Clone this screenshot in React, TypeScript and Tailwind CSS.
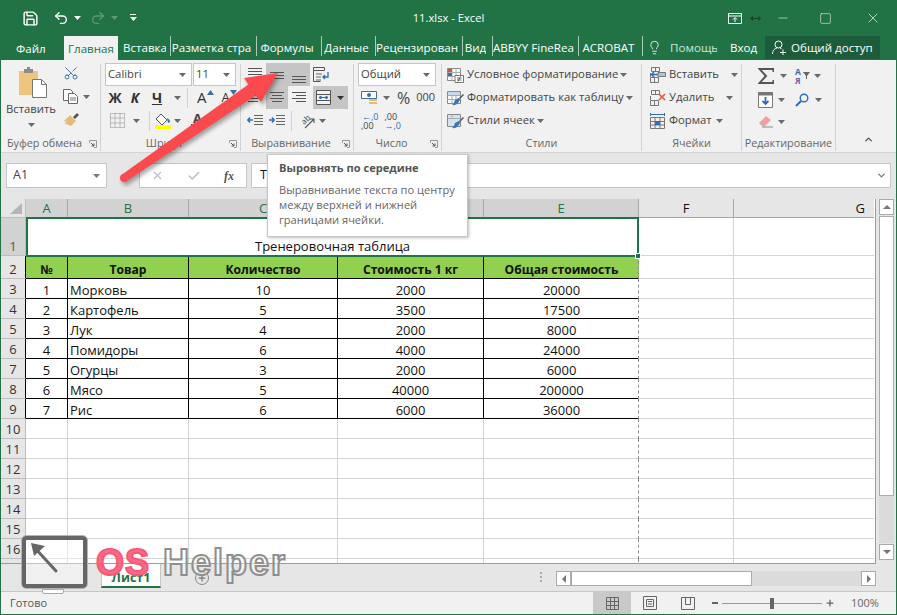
import React from 'react';
import { Check, ChevronDown, ChevronUp, Lightbulb, Minus, Plus, Save, Scissors, Square, Undo2, Redo2, X } from 'lucide-react';

const Caret = ({ color = '#6a6a6a' }: { color?: string }) => (
  <svg width="7" height="4" viewBox="0 0 7 4" className="shrink-0"><path d="M0 0h7L3.500 4z" fill={color} /></svg>
);

// horizontal lines used by all alignment icons
const Lines = ({ rows }: { rows: [number, number, number][] }) => (
  <svg width="16" height="18" viewBox="0 0 16 18">
    {rows.map(([y, x1, x2], i) => (
      <line key={i} x1={x1} x2={x2} y1={y + 0.5} y2={y + 0.5} stroke="#555" />
    ))}
  </svg>
);

const Launcher = () => (
  <svg width="8" height="8" viewBox="0 0 8 8" className="absolute right-[3px] bottom-[3px]">
    <path d="M.5 3V.5H7.500V7.500H5" fill="none" stroke="#999" />
    <path d="M2 3l3 3M5 3.500V6H2.500" fill="none" stroke="#555" />
  </svg>
);

function Group({ w, label, launcher, children }: { w: string; label: string; launcher?: boolean; children: React.ReactNode }) {
  return (
    <div className={`relative shrink-0 ${w} h-[87px] mt-[4px] border-r border-[#d2d2d2] flex flex-col`}>
      <div className="h-[71px] flex">{children}</div>
      <div className={`h-[16px] leading-[16px] text-center text-[10.8px] text-[#666] whitespace-nowrap ${launcher ? 'pr-[12px]' : ''}`}>{label}</div>
      {launcher && <Launcher />}
    </div>
  );
}

const tabs = [
  ['Вставка', 'w-[48px]'],
  ['Разметка стра', 'w-[86px]'],
  ['Формулы', 'w-[65px]'],
  ['Данные', 'w-[54px]'],
  ['Рецензирован', 'w-[87px]'],
  ['Вид', 'w-[30px]'],
  ['ABBYY FineRea', 'w-[86px]'],
  ['ACROBAT', 'w-[64px]'],
];

function TitleBar() {
  return (
    <div className="h-[36px] shrink-0 flex items-center text-white">
      <div className="flex-1 flex items-center">
        <Save size={17} strokeWidth={2} className="ml-[21px]" />
        <Undo2 size={16} strokeWidth={2} className="ml-[14px]" />
        <span className="ml-[5px]"><Caret color="#fff" /></span>
        <Redo2 size={16} strokeWidth={2} className="ml-[9px] text-[#5d9a78]" />
        <span className="ml-[5px]"><Caret color="#5d9a78" /></span>
        <svg width="7" height="8" viewBox="0 0 7 8" className="ml-[12px]"><path d="M0 .5h6" stroke="#fff" /><path d="M0 3h7L3.500 7z" fill="#fff" /></svg>
      </div>
      <div className="text-center text-[11.2px] w-[80px] whitespace-nowrap">11.xlsx - Excel</div>
      <div className="flex-1 flex items-center justify-end">
        <svg width="14" height="11" viewBox="0 0 14 11" className="mr-[8px]">
          <path d="M.5.5h13v10H.5zM.5 3h13M7 9V5M5 6.500L7 4.500l2 2" fill="none" stroke="#fff" />
        </svg>
        <svg width="11" height="7" viewBox="0 0 11 7" className="mr-[15px]">
          <path d="M0 3.500L3 1v5zM11 3.500L8 1v5zM2 3h7v1H2z" fill="#17402a" />
        </svg>
        <Minus size={14} strokeWidth={1} className="mr-[29px]" />
        <Square size={13} strokeWidth={1} className="mr-[33px]" />
        <X size={16} strokeWidth={1} className="mr-[15px]" />
      </div>
    </div>
  );
}

function TabBar() {
  return (
    <div className="h-[24px] shrink-0 flex items-stretch text-[11.6px] text-white">
      <div className="w-[63px] pl-[15px] leading-[26px]">Файл</div>
      <div className="w-[54px] bg-[#f1f1f1] text-[#217346] text-center leading-[25px]">Главная</div>
      <div className="w-[5px]" />
      {tabs.map(([t, w]) => (
        <div key={t} className={`${w} shrink-0 flex h-[20px] border-r border-[#a9cdb9] whitespace-nowrap leading-[23px] pr-[4px] justify-center`}>
          <span className="overflow-hidden">{t}</span>
        </div>
      ))}
      <Lightbulb size={15} strokeWidth={1.3} className="ml-[4px] mt-[4px]" />
      <div className="w-[47px] ml-[8px] overflow-hidden whitespace-nowrap leading-[24px] text-[#cfe3d8]">Помощь</div>
      <div className="w-[48px] pl-[13px] leading-[24px]">Вход</div>
      <div className="w-[115px] h-[23px] bg-[#1d5c3a] flex items-center pl-[7px] gap-[4px] whitespace-nowrap">
        <svg width="15" height="15" viewBox="0 0 15 15">
          <circle cx="6.500" cy="4.500" r="3.500" fill="none" stroke="#fff" />
          <path d="M.5 14c0-4 2.500-5.500 4.500-6M8 8l1.500.7" fill="none" stroke="#fff" />
          <path d="M8 12.500h6M11 9.500v6" stroke="#fff" />
        </svg>
        <span>Общий доступ</span>
      </div>
    </div>
  );
}

const Cell = ({ on, children }: { on?: boolean; children?: React.ReactNode }) => (
  <div className={`w-[22px] h-[23px] flex items-center justify-center ${on ? 'bg-[#c5c5c5]' : ''}`}>{children}</div>
);

function StyleIcon({ i }: { i: number }) {
  return (
    <svg width="17" height="16" viewBox="0 0 17 16" className="mr-[3px]">
      <path d="M.5 1.500h13v12H.5z" fill={i === 2 ? '#d5e3f1' : '#fff'} stroke="#888" />
      {i !== 2 && <path d="M.5 5.500h13M.5 9.500h13M5 1.500v12M9 1.500v12" fill="none" stroke="#aaa" />}
      {i === 2 && <path d="M.5 5.500h13M5 1.500v4" fill="none" stroke="#aaa" />}
      {i === 0 && <path d="M1 2h4v3H1z" fill="#d9542b" />}
      {i === 0 && <path d="M1 6h4v3H1z" fill="#3b6fa5" />}
      {i === 0 && <path d="M8 8.500h8.500v7H8z" fill="#fff" stroke="#555" strokeWidth=".8" />}
      {i === 0 && <path d="M10 11h4.500M10 13h4.500M11 14.500l2.500-5" stroke="#333" strokeWidth=".7" />}
      {i === 1 && <path d="M1 2h12v3H1z" fill="#c7d9ec" />}
      {i !== 0 && <path d="M12 8l4-4 1 1-4 4z" fill="#555" />}
      {i !== 0 && <path d="M8 10c2-1 3-2 4-2l1 1c0 1-1 3-2 4-1 1.500-3 2.500-6 2 2-1 2-3 3-5z" fill="#3b76b8" />}
    </svg>
  );
}

function CellIcon({ i }: { i: number }) {
  if (i === 2) {
    return (
      <svg width="16" height="16" viewBox="0 0 16 16" className="mr-[3px]">
        <path d="M.5 0v3M14.500 0v3M1 1.500h13" stroke="#2f6eb3" />
        <path d="M.5 4.500h14v11H.5zM.5 8.500h14M.5 12h14M5 4.500v11M10 4.500v11" fill="none" stroke="#777" />
        <path d="M5 8h5v4H5z" fill="#2f6eb3" />
      </svg>
    );
  }
  return (
    <svg width="16" height="16" viewBox="0 0 16 16" className="mr-[3px]">
      <path d="M1.500.5h8v4h-8zM5.500.5v4M.5 10.500h8v5h-8zM4.500 10.500v5M.5 6v4" fill="none" stroke="#777" />
      {i === 0 && <path d="M8 5.500h7.500v4H8z" fill="#a8c4e0" stroke="#777" />}
      {i === 0 && <path d="M8 7.500H1M4 5L1.500 7.500 4 10" fill="none" stroke="#2f6eb3" strokeWidth="1.500" />}
      {i === 1 && <path d="M9 4l6 6M15 4l-6 6" stroke="#e3593d" strokeWidth="1.700" />}
    </svg>
  );
}

function Ribbon() {
  return (
    <div className="h-[93px] shrink-0 bg-[#f1f1f1] border-b border-[#d4d4d4] flex items-start text-[#444] text-[11.3px]">
      <Group w="w-[100px]" label="Буфер обмена" launcher>
        <div className="w-[58px] flex flex-col items-center pt-[3px] pl-[6px]">
          <svg width="30" height="32" viewBox="0 0 30 32">
            <path d="M1 4h19v24H1z" fill="#eec57d" />
            <path d="M6 2h9v4H6z" fill="#8c8c8c" /><path d="M9 0h3v3H9z" fill="#8c8c8c" />
            <path d="M14.500 12.500h9l5 5v13h-14z" fill="#fff" stroke="#777" />
            <path d="M23.500 12.500v5h5" fill="none" stroke="#777" />
          </svg>
          <div className="mt-[2px] ml-[-4px] leading-[16px] text-[#444]">Вставить</div>
          <div className="mt-[6px] ml-[-4px]"><Caret /></div>
        </div>
        <div className="flex flex-col pl-[4px] pt-[1px] gap-[8px]">
          <Scissors size={16} strokeWidth={1.4} className="text-[#3b6fa5] -rotate-90" />
          <div className="flex items-center gap-[5px]">
            <svg width="15" height="15" viewBox="0 0 15 15"><path d="M.5.5h7l2 2v9H.5z" fill="#fff" stroke="#666" /><path d="M5.500 4.500h6l3 3v7h-9z" fill="#fff" stroke="#666" /><path d="M7 9h6M7 11h6" stroke="#777" /></svg>
            <Caret />
          </div>
          <svg width="17" height="15" viewBox="0 0 17 15"><path d="M10 5l4-4 2 2-4 4z" fill="#555" /><path d="M7 3l6 6-5 5-7-3 3-1-3-1z" fill="#e3bb7b" /></svg>
        </div>
      </Group>

      <Group w="w-[140px]" label="Шрифт" launcher>
        <div className="flex flex-col pl-[4px]">
          <div className="flex gap-[1px] mt-[-1px]">
            <div className="w-[87px] h-[23px] bg-white border border-[#c6c6c6] flex items-center justify-between pl-[2px] pr-[5px]">Calibri<Caret /></div>
            <div className="w-[43px] h-[23px] bg-white border border-[#c6c6c6] flex items-center justify-between pl-[2px] pr-[5px]">11<Caret /></div>
          </div>
          <div className="h-[23px] flex items-center text-[14px] text-[#333] font-bold">
            <span className="w-[20px] text-center">Ж</span>
            <span className="w-[20px] text-center italic">К</span>
            <span className="w-[24px] text-center underline">Ч</span>
            <span className="ml-[5px]"><Caret /></span>
            <div className="w-px h-[20px] bg-[#d2d2d2] ml-[6px]" />
            <span className="ml-[9px] text-[15px] font-normal">A</span>
            <svg width="7" height="5" viewBox="0 0 7 5" className="mb-[10px]"><path d="M0 5l3.500-5L7 5z" fill="#3b6fa5" /></svg>
            <span className="ml-[8px] text-[13px] font-normal">A</span>
            <svg width="7" height="5" viewBox="0 0 7 5" className="mb-[10px]"><path d="M0 0l3.500 5L7 0z" fill="#3b6fa5" /></svg>
          </div>
          <div className="h-[23px] flex items-center">
            <svg width="15" height="15" viewBox="0 0 15 15" className="ml-[5px]"><path d="M.5.5h14v14H.5zM5 .5v14M10 .5v14M.5 5h14M.5 10h14" fill="none" stroke="#888" strokeDasharray="1 1" /></svg>
            <span className="ml-[8px]"><Caret /></span>
            <div className="w-px h-[20px] bg-[#d2d2d2] ml-[9px]" />
            <div className="ml-[4px] flex flex-col items-center">
              <svg width="17" height="12" viewBox="0 0 17 12"><path d="M7 1l6 6-5 5-6-6z" fill="#fff" stroke="#555" /><path d="M13 5c2 1 3 2 3 4l-2 1z" fill="#2f6eb3" /></svg>
              <div className="w-[16px] h-[4px] bg-[#ffff00]" />
            </div>
            <span className="ml-[3px]"><Caret /></span>
            <div className="ml-[10px] flex flex-col items-center leading-none">
              <span className="text-[13px] font-bold leading-[11px]">A</span>
              <div className="w-[13px] h-[4px] bg-[#ff0000]" />
            </div>
          </div>
        </div>
      </Group>

      <Group w="w-[113px]" label="Выравнивание" launcher>
        <div className="pl-[3px] mt-[-1px]">
          <div className="flex">
            <Cell><Lines rows={[[2, 1, 15], [5, 1, 15], [8, 1, 15]]} /></Cell>
            <Cell on><Lines rows={[[6, 1, 15], [9, 1, 15], [12, 1, 15]]} /></Cell>
            <Cell on><Lines rows={[[10, 1, 15], [13, 1, 15], [16, 1, 15]]} /></Cell>
            <Cell>
              <svg width="16" height="16" viewBox="0 0 16 16"><path d="M.5.5h11v3H.5zM.5 3.500v11h7" fill="none" stroke="#555" /><path d="M3 7h6M3 10h5M3 13h5" stroke="#666" /><path d="M15 5v5h-5M12 8l-2 2 2 2" fill="none" stroke="#2f6eb3" strokeWidth="1.300" /></svg>
            </Cell>
          </div>
          <div className="flex">
            <Cell><Lines rows={[[3, 1, 15], [6, 1, 11], [9, 1, 15], [12, 1, 11]]} /></Cell>
            <Cell on><Lines rows={[[3, 1, 15], [6, 3, 13], [9, 1, 15], [12, 3, 13]]} /></Cell>
            <Cell><Lines rows={[[3, 1, 15], [6, 5, 15], [9, 1, 15], [12, 5, 15]]} /></Cell>
            <div className="w-[35px] ml-[3px] h-[23px] bg-[#c5c5c5] flex items-center pl-[3px] gap-[6px]">
              <svg width="15" height="15" viewBox="0 0 15 15"><path d="M.5.5h14v14H.5zM.5 4.500h14M.5 10.500h14" fill="#f1f1f1" stroke="#555" /><path d="M3 7.500h9M3 7.500l2-1.500v3zM12 7.500l-2-1.500v3z" stroke="#2f6eb3" fill="#2f6eb3" /></svg>
              <Caret color="#333" />
            </div>
          </div>
          <div className="flex items-center">
            <Cell>
              <svg width="16" height="13" viewBox="0 0 16 13"><path d="M7 1.500h9M7 4.500h9M7 7.500h9M7 10.500h9" stroke="#666" /><path d="M6 6H1M3 3.500L.8 6 3 8.500" fill="none" stroke="#2f6eb3" strokeWidth="1.500" /></svg>
            </Cell>
            <Cell>
              <svg width="16" height="13" viewBox="0 0 16 13"><path d="M7 1.500h9M7 4.500h9M7 7.500h9M7 10.500h9" stroke="#666" /><path d="M0 6h5M3 3.500L5.200 6 3 8.500" fill="none" stroke="#2f6eb3" strokeWidth="1.500" /></svg>
            </Cell>
            <div className="w-px h-[20px] bg-[#d2d2d2] ml-[3px]" />
            <svg width="18" height="17" viewBox="0 0 18 17" className="ml-[7px] overflow-visible">
              <text x="2" y="11" fontSize="8" fill="#444" transform="rotate(-45 6 8)">ab</text>
              <path d="M6 16L15 7M15 11V7h-4" fill="none" stroke="#555" strokeWidth="1.100" />
            </svg>
            <span className="ml-[2px]"><Caret /></span>
          </div>
        </div>
      </Group>

      <Group w="w-[88px]" label="Число" launcher>
        <div className="pl-[4px] flex flex-col mt-[-1px]">
          <div className="w-[78px] h-[23px] bg-white border border-[#c6c6c6] flex items-center justify-between pl-[2px] pr-[5px]">Общий<Caret /></div>
          <div className="h-[23px] flex items-center pl-[3px]">
            <svg width="17" height="16" viewBox="0 0 17 16"><path d="M.5 1.500h15v7H.5z" fill="#fff" stroke="#3b6fa5" /><circle cx="8" cy="5" r="2" fill="#3b6fa5" /><path d="M8 9h8v2H8zM8 12h8v2H8z" fill="#e3bb7b" /></svg>
            <span className="ml-[5px]"><Caret /></span>
            <span className="ml-[7px] text-[16px] text-[#444]">%</span>
            <span className="ml-[6px] text-[11px]">000</span>
          </div>
          <div className="h-[23px] flex items-center pl-[3px] gap-[6px] text-[9px] text-[#444]">
            <div className="flex flex-col leading-[9px]"><span className="text-[#2f6eb3] pl-[1px]">←,0</span><span>,00</span></div>
            <div className="flex flex-col leading-[9px]"><span>,00</span><span className="text-[#2f6eb3]">→,0</span></div>
          </div>
        </div>
      </Group>

      <Group w="w-[200px]" label="Стили">
        <div className="pl-[5px] flex flex-col whitespace-nowrap mt-[-1px]">
          {['Условное форматирование', 'Форматировать как таблицу', 'Стили ячеек'].map((t, i) => (
            <div key={t} className="h-[23px] flex items-center">
              <StyleIcon i={i} />
              <span>{t}</span>
              <span className="ml-[2px]"><Caret /></span>
            </div>
          ))}
        </div>
      </Group>

      <Group w="w-[100px]" label="Ячейки">
        <div className="pl-[8px] flex flex-col mt-[-1px]">
          {[['Вставить', 'ml-[12px]'], ['Удалить', 'ml-[12px]'], ['Формат', 'ml-[4px]']].map(([t, m], i) => (
            <div key={t} className="h-[23px] flex items-center">
              <CellIcon i={i} />
              <span>{t}</span>
              <span className={m}><Caret /></span>
            </div>
          ))}
        </div>
      </Group>

      <Group w="w-[94px]" label="Редактирование">
        <div className="pl-[16px] grid grid-cols-[37px_35px] mt-[-1px] h-[69px]">
          <div className="flex items-center gap-[6px]">
            <svg width="16" height="16" viewBox="0 0 16 16"><path d="M15.500 4V1H1.500L8 8l-6.500 7h14v-3" fill="none" stroke="#555" strokeWidth="2" /></svg>
            <Caret />
          </div>
          <div className="flex items-center gap-[2px]">
            <div className="flex flex-col text-[8.500px] leading-[9px] font-bold text-[#3b6fa5]"><span>А</span><span className="text-[#7a5ea8]">Я</span></div>
            <svg width="7" height="7" viewBox="0 0 7 7"><path d="M0 0h7L4 4v3H3V4z" fill="#666" /></svg>
            <span className="ml-[2px]"><Caret /></span>
          </div>
          <div className="flex items-center gap-[5px]">
            <svg width="15" height="16" viewBox="0 0 15 16"><path d="M.5.5h14v15H.5z" fill="#fff" stroke="#777" /><path d="M.5.5h14v3H.5z" fill="#777" /><path d="M7.500 5v7M4.500 9l3 3 3-3" fill="none" stroke="#2f6eb3" strokeWidth="1.800" /></svg>
            <Caret />
          </div>
          <div className="flex items-center gap-[6px]">
            <svg width="14" height="14" viewBox="0 0 14 14"><circle cx="9" cy="5" r="3.800" fill="none" stroke="#2f6eb3" strokeWidth="1.400" /><path d="M6 8l-5 5" stroke="#2f6eb3" strokeWidth="2" /></svg>
            <Caret />
          </div>
          <div className="flex items-center gap-[5px]">
            <svg width="15" height="13" viewBox="0 0 15 13"><path d="M1 8l7-7 5 4-6 6H4z" fill="#f0a0a0" /><path d="M4 12h11" stroke="#888" /></svg>
            <Caret />
          </div>
        </div>
      </Group>

      <div className="flex-1 relative h-[87px]">
        <ChevronUp size={11} strokeWidth={3} className="absolute right-[22px] bottom-[2px] text-[#555]" />
      </div>
    </div>
  );
}

function FormulaBar() {
  return (
    <div className="h-[46px] shrink-0 bg-[#e6e6e6] flex items-start pt-[10px] text-[12.5px] text-[#444]">
      <div className="ml-[5px] w-[101px] h-[25px] bg-white border border-[#c6c6c6] flex items-center justify-between pl-[6px] pr-[6px]">
        <span>A1</span><Caret color="#777" />
      </div>
      <div className="ml-[32px] w-[108px] h-[25px] bg-white border border-[#c6c6c6] flex items-center text-[#bbb]">
        <X size={13} strokeWidth={2} className="ml-[11px]" />
        <Check size={14} strokeWidth={2.500} className="ml-[23px]" />
        <span className="ml-[23px] text-[12px] italic text-[#555] font-['Liberation_Serif',serif] font-bold">fx</span>
      </div>
      <div className="ml-[4px] flex-1 mr-[5px] h-[25px] bg-white border border-[#c6c6c6] flex items-center justify-between pl-[8px] pr-[3px] text-[#111]">
        <span>Т</span>
        <ChevronDown size={11} strokeWidth={3} className="text-[#777]" />
      </div>
    </div>
  );
}

const rows = [
  ['1', 'Морковь', '10', '2000', '20000'],
  ['2', 'Картофель', '5', '3500', '17500'],
  ['3', 'Лук', '4', '2000', '8000'],
  ['4', 'Помидоры', '6', '4000', '24000'],
  ['5', 'Огурцы', '3', '2000', '6000'],
  ['6', 'Мясо', '5', '40000', '200000'],
  ['7', 'Рис', '6', '6000', '36000'],
];
const heads = ['№', 'Товар', 'Количество', 'Стоимость 1 кг', 'Общая стоимость'];
const emptyRows = [10, 11, 12, 13, 14, 15, 16, 17];

const RowNum = ({ n, on, edge }: { n?: number; on?: boolean; edge?: boolean }) => (
  <div className={`border-r border-b border-b-[#bdbdbd] text-[13px] text-center flex items-end justify-center leading-[18px] ${edge ? 'border-r-black' : 'border-r-[#bdbdbd]'} ${on ? 'bg-[#d2d2d2] text-[#217346]' : 'bg-[#e6e6e6] text-[#333]'}`}>{n}</div>
);

// right edge of column E: the dashed page break runs over every row below the title
const PageBreak = ({ h }: { h: string }) => <div className={`absolute right-0 top-0 ${h} border-r border-dashed border-[#8a8a8a]`} />;

function Sheet() {
  return (
    <div className="h-[365px] shrink-0 flex bg-[#e6e6e6]">
      <div className="w-[875px] h-[365px] border-b border-r border-[#9c9c9c] overflow-hidden shrink-0 relative">
        <div className="grid grid-cols-[25px_42px_121px_149px_146px_155px_95px_140px] grid-rows-[19px_38px_23px_repeat(15,20px)] text-[13px] text-[#111] bg-white">
          <div className="bg-[#e6e6e6] border-r border-b border-[#bdbdbd] flex items-end justify-end pr-[3px] pb-[3px]">
            <svg width="12" height="11" viewBox="0 0 12 11"><path d="M12 0v11H0z" fill="#b5b5b5" /></svg>
          </div>
          {['A', 'B', 'C', 'D', 'E'].map((c) => (
            <div key={c} className="bg-[#d2d2d2] border-r border-b border-[#a8a8a8] text-[#217346] text-center leading-[19px]">{c}</div>
          ))}
          <div className="bg-[#e6e6e6] border-r border-b border-[#a8a8a8] text-center leading-[19px]">F</div>
          <div className="bg-[#e6e6e6] border-b border-[#a8a8a8] text-right pr-[9px] leading-[19px]">G</div>

          <RowNum n={1} on />
          <div className="col-span-5 border-2 border-[#217346] mt-[-1px] mb-[-1px] relative z-10 flex items-end justify-center leading-[17px]">
            Тренеровочная таблица
            <div className="absolute right-[-4px] bottom-[-4px] w-[6px] h-[6px] bg-[#217346] border border-white" />
          </div>
          <div className="border-r border-b border-[#d4d4d4]" />
          <div className="border-b border-[#d4d4d4]" />

          <RowNum n={2} edge />
          {heads.map((h, j) => (
            <div key={h} className={`relative bg-[#92d050] border-b border-black font-bold text-[12.1px] text-center leading-[27px] ${j < 4 ? 'border-r' : ''}`}>
              {h}
              {j === 4 && <PageBreak h="h-[23px]" />}
            </div>
          ))}
          <div className="border-r border-b border-[#d4d4d4]" />
          <div className="border-b border-[#d4d4d4]" />

          {rows.map((r, i) => (
            <React.Fragment key={i}>
              <RowNum n={i + 3} edge />
              {r.map((v, j) => (
                <div key={j} className={`relative border-b border-black leading-[22px] ${j < 4 ? 'border-r' : ''} ${j === 1 ? 'pl-[2px]' : 'text-center'}`}>
                  {v}
                  {j === 4 && <PageBreak h="h-[20px]" />}
                </div>
              ))}
              <div className="border-r border-b border-[#d4d4d4]" />
              <div className="border-b border-[#d4d4d4]" />
            </React.Fragment>
          ))}

          {emptyRows.map((n) => (
            <React.Fragment key={n}>
              <RowNum n={n < 17 ? n : undefined} />
              <div className="border-r border-b border-[#d4d4d4]" />
              <div className="border-r border-b border-[#d4d4d4]" />
              <div className="border-r border-b border-[#d4d4d4]" />
              <div className="border-r border-b border-[#d4d4d4]" />
              <div className="relative border-b border-[#d4d4d4]"><PageBreak h="h-[20px]" /></div>
              <div className="border-r border-b border-[#d4d4d4]" />
              <div className="border-b border-[#d4d4d4]" />
            </React.Fragment>
          ))}
        </div>
      </div>
      <div className="w-[20px] shrink-0 pl-[3px] pr-[2px] flex flex-col">
        <div className="h-[16px] bg-white border border-[#ababab] flex items-center justify-center"><svg width="8" height="4" viewBox="0 0 8 4"><path d="M0 4h8L4 0z" fill="#777" /></svg></div>
        <div className="h-[280px] mt-[1px] bg-white border border-[#ababab]" />
        <div className="flex-1 bg-[#dbdbdb] mb-[1px]" />
        <div className="h-[16px] bg-white border border-[#ababab] mb-[4px] flex items-center justify-center"><svg width="8" height="4" viewBox="0 0 8 4"><path d="M0 0h8L4 4z" fill="#777" /></svg></div>
      </div>
    </div>
  );
}

function SheetBar() {
  return (
    <div className="h-[28px] shrink-0 bg-[#e6e6e6] border-b border-[#c6c6c6] flex items-start">
      <div className="ml-[100px] w-[60px] h-[24px] bg-white border-x border-[#c6c6c6] border-b-2 border-b-[#217346] text-center text-[12.500px] font-bold text-[#217346] leading-[27px]">Лист1</div>
      <div className="ml-[34px] mt-[7px] w-[14px] h-[14px] rounded-full border border-[#888] flex items-center justify-center"><Plus size={10} strokeWidth={3} className="text-[#777]" /></div>
      <div className="ml-[331px] mt-[8px] flex flex-col gap-[2px]">
        <div className="w-[2px] h-[2px] bg-[#aaa]" /><div className="w-[2px] h-[2px] bg-[#aaa]" /><div className="w-[2px] h-[2px] bg-[#aaa]" />
      </div>
      <div className="ml-[14px] mt-[7px] w-[320px] h-[15px] bg-[#dbdbdb] flex">
        <div className="w-[15px] bg-white border border-[#ababab] flex items-center justify-center"><svg width="4" height="8" viewBox="0 0 4 8"><path d="M4 0v8L0 4z" fill="#777" /></svg></div>
        <div className="w-[181px] bg-white border border-[#ababab]" />
        <div className="flex-1" />
        <div className="w-[15px] bg-white border border-[#ababab] flex items-center justify-center"><svg width="4" height="8" viewBox="0 0 4 8"><path d="M0 0v8l4-4z" fill="#777" /></svg></div>
      </div>
    </div>
  );
}

function StatusBar() {
  return (
    <div className="h-[22px] shrink-0 bg-[#f1f1f1] flex items-center text-[11px] text-[#555]">
      <span className="ml-[9px] w-[36px]">Готово</span>
      <div className="ml-[547px] w-[38px] h-[22px] bg-[#c9c9c9] flex items-center justify-center">
        <svg width="13" height="13" viewBox="0 0 13 13"><path d="M.5.5h12v12H.5zM4.500.5v12M8.500.5v12M.5 4.500h12M.5 8.500h12" fill="none" stroke="#666" /></svg>
      </div>
      <svg width="14" height="14" viewBox="0 0 14 14" className="ml-[12px]"><path d="M.5.5h13v13H.5z" fill="none" stroke="#666" /><path d="M3.500 3.500h7v7h-7zM5 5.500h4M5 8h4" fill="none" stroke="#666" /></svg>
      <svg width="14" height="13" viewBox="0 0 14 13" className="ml-[24px]"><path d="M.5.5h13v12H.5zM4.500.5v7h5v-7" fill="none" stroke="#666" /></svg>
      <div className="ml-[17px] w-[6px] h-[2px] bg-[#666]" />
      <div className="ml-[4px] w-[100px] h-px bg-[#999] relative">
        <div className="absolute left-[48px] top-[-5px] w-[4px] h-[11px] bg-[#666]" />
      </div>
      <Plus size={10} strokeWidth={3} className="ml-[3px] text-[#666]" />
      <span className="ml-[16px] text-[#666]">100%</span>
    </div>
  );
}

export default function App() {
  return (
    <div className="relative w-[897px] h-[615px] overflow-hidden bg-[#217346] border-x border-b border-[#217346] flex flex-col [font-family:'Open_Sans',sans-serif]">
      <TitleBar />
      <TabBar />
      <Ribbon />
      <FormulaBar />
      <Sheet />
      <SheetBar />
      <StatusBar />

      {/* tooltip */}
      <div className="absolute left-[266px] top-[154px] w-[201px] h-[83px] bg-white border border-[#c6c6c6] shadow-[1px_1px_3px_rgba(0,0,0,0.25)] pl-[11px] pt-[5px] text-[11.1px] text-[#666] leading-[15px] z-20">
        <div className="font-bold text-[#555] mb-[7px]">Выровнять по середине</div>
        <div>Выравнивание текста по центру</div>
        <div>между верхней и нижней</div>
        <div>границами ячейки.</div>
      </div>

      {/* red arrow */}
      <svg width="180" height="120" viewBox="0 0 180 120" className="absolute left-[115px] top-[68px] z-30 drop-shadow-[2px_3px_2px_rgba(0,0,0,0.35)]">
        <circle cx="8" cy="110" r="4" fill="#fa4a4d" />
        <path d="M5.700 106.700L132.300 16.600L128 10L162 5L145 34L139.700 27.400L10.300 113.300z" fill="#fa4a4d" />
      </svg>

      {/* watermark */}
      <div className="absolute left-[21px] top-[536px] z-30 w-[65px] h-[52px] rounded-[4px] border-[4px] border-[#666] outline outline-[#b5b5b5] bg-white/40">
        <svg width="40" height="40" viewBox="0 0 40 40" className="absolute left-0 top-0">
          <path d="M8 7l22 24" stroke="#666" strokeWidth="3" strokeLinecap="round" /><path d="M5 3l14 3-11 10z" fill="#666" />
        </svg>
      </div>
      <div className="absolute left-[41px] top-[589px] z-30 w-[22px] h-[5px] rounded-b-[2px] border border-[#aaa] bg-white" />
      <div className="absolute left-[95px] top-[541px] z-30 whitespace-nowrap text-[36px] leading-[44px] font-bold [font-family:'Liberation_Sans',sans-serif] flex">
        <span className="tracking-[1px] text-[#fb5878]/90 [-webkit-text-stroke:2px_#fb5878]">OS</span>
        <span className="ml-[13px] tracking-[2px] text-white/50 [-webkit-text-stroke:2px_#8f8f8f]">Helper</span>
      </div>
    </div>
  );
}
